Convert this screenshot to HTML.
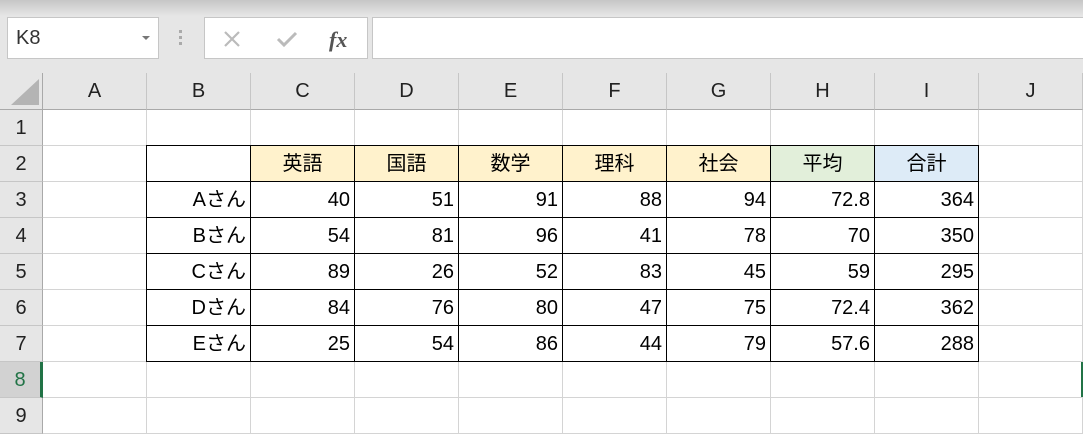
<!DOCTYPE html>
<html><head><meta charset="utf-8"><style>
*{margin:0;padding:0;box-sizing:border-box}
body{width:1083px;height:434px;overflow:hidden;background:#e6e6e6;position:relative;font-family:"Liberation Sans","Noto Sans CJK JP",sans-serif;color:#000}
.a{position:absolute}
.top{left:0;top:0;width:1083px;height:16px;background:linear-gradient(#c6c6c6,#e6e6e6)}
.box{background:#fff;border:1px solid #c6c6c6}
.ch{top:73px;height:37px;border-right:1px solid #c6c6c6;border-bottom:1px solid #a9a9a9;text-align:center;font-size:20px;line-height:36px;color:#222}
.rh{left:0;width:43px;height:36px;border-bottom:1px solid #c6c6c6;border-right:1px solid #a9a9a9;text-align:center;font-size:20px;line-height:36px;color:#222}
.t{height:37px;width:105px;border:1px solid #000;font-size:20px;line-height:36px;text-align:right;padding-right:4px}
.hd{text-align:center;padding:0;background:#fff2cc}
</style></head><body>
<div class="a top"></div>
<div class="a box" style="left:7px;top:17px;width:152px;height:42px;font-size:20px;line-height:40px;padding-left:8px;color:#333">K8
<span class="a" style="right:8px;top:18px;width:0;height:0;border-left:4px solid transparent;border-right:4px solid transparent;border-top:4px solid #777"></span></div>
<div class="a" style="left:179px;top:30px;width:3px;height:3px;background:#aaa"></div>
<div class="a" style="left:179px;top:36px;width:3px;height:3px;background:#aaa"></div>
<div class="a" style="left:179px;top:42px;width:3px;height:3px;background:#aaa"></div>
<div class="a box" style="left:204px;top:17px;width:164px;height:42px">
<svg class="a" style="left:17px;top:11px" width="20" height="20"><path d="M3 3L17 17M17 3L3 17" stroke="#bbb" stroke-width="2.2"/></svg>
<svg class="a" style="left:70px;top:11px" width="24" height="20"><path d="M3 10L9 16L21 4" stroke="#bbb" stroke-width="3" fill="none"/></svg>
<div class="a" style="left:124px;top:9px;font-family:'Liberation Serif',serif;font-style:italic;font-weight:bold;font-size:22px;color:#555">fx</div>
</div>
<div class="a box" style="left:372px;top:17px;width:720px;height:42px"></div>

<div class="a" style="left:0;top:73px;width:43px;height:37px;border-right:1px solid #a9a9a9;border-bottom:1px solid #a9a9a9"></div>
<svg class="a" style="left:11px;top:79px" width="29" height="27"><path d="M28 0L28 26L0 26Z" fill="#b4b4b4"/></svg>
<div class="a ch" style="left:43px;width:104px">A</div>
<div class="a ch" style="left:147px;width:104px">B</div>
<div class="a ch" style="left:251px;width:104px">C</div>
<div class="a ch" style="left:355px;width:104px">D</div>
<div class="a ch" style="left:459px;width:104px">E</div>
<div class="a ch" style="left:563px;width:104px">F</div>
<div class="a ch" style="left:667px;width:104px">G</div>
<div class="a ch" style="left:771px;width:104px">H</div>
<div class="a ch" style="left:875px;width:104px">I</div>
<div class="a ch" style="left:979px;width:104px">J</div>

<div class="a rh" style="top:110px">1</div>
<div class="a rh" style="top:146px">2</div>
<div class="a rh" style="top:182px">3</div>
<div class="a rh" style="top:218px">4</div>
<div class="a rh" style="top:254px">5</div>
<div class="a rh" style="top:290px">6</div>
<div class="a rh" style="top:326px">7</div>
<div class="a rh" style="top:362px;background:#d2d2d2;color:#217346;border-right:3px solid #217346">8</div>
<div class="a rh" style="top:398px">9</div>

<div class="a" style="left:43px;top:110px;width:1040px;height:324px;background:#fff;
background-image:linear-gradient(90deg,transparent 103px,#d4d4d4 103px),linear-gradient(transparent 35px,#d4d4d4 35px);background-size:104px 36px,104px 36px"></div>
<div class="a" style="left:1081px;top:362px;width:2px;height:35px;background:#217346"></div>

<div class="a t" style="left:146px;top:145px"></div>
<div class="a t hd" style="left:250px;top:145px">英語</div>
<div class="a t hd" style="left:354px;top:145px">国語</div>
<div class="a t hd" style="left:458px;top:145px">数学</div>
<div class="a t hd" style="left:562px;top:145px">理科</div>
<div class="a t hd" style="left:666px;top:145px">社会</div>
<div class="a t hd" style="left:770px;top:145px;background:#e2efda">平均</div>
<div class="a t hd" style="left:874px;top:145px;background:#ddebf7">合計</div>

<div class="a t" style="left:146px;top:181px">Aさん</div><div class="a t" style="left:250px;top:181px">40</div><div class="a t" style="left:354px;top:181px">51</div><div class="a t" style="left:458px;top:181px">91</div><div class="a t" style="left:562px;top:181px">88</div><div class="a t" style="left:666px;top:181px">94</div><div class="a t" style="left:770px;top:181px">72.8</div><div class="a t" style="left:874px;top:181px">364</div>
<div class="a t" style="left:146px;top:217px">Bさん</div><div class="a t" style="left:250px;top:217px">54</div><div class="a t" style="left:354px;top:217px">81</div><div class="a t" style="left:458px;top:217px">96</div><div class="a t" style="left:562px;top:217px">41</div><div class="a t" style="left:666px;top:217px">78</div><div class="a t" style="left:770px;top:217px">70</div><div class="a t" style="left:874px;top:217px">350</div>
<div class="a t" style="left:146px;top:253px">Cさん</div><div class="a t" style="left:250px;top:253px">89</div><div class="a t" style="left:354px;top:253px">26</div><div class="a t" style="left:458px;top:253px">52</div><div class="a t" style="left:562px;top:253px">83</div><div class="a t" style="left:666px;top:253px">45</div><div class="a t" style="left:770px;top:253px">59</div><div class="a t" style="left:874px;top:253px">295</div>
<div class="a t" style="left:146px;top:289px">Dさん</div><div class="a t" style="left:250px;top:289px">84</div><div class="a t" style="left:354px;top:289px">76</div><div class="a t" style="left:458px;top:289px">80</div><div class="a t" style="left:562px;top:289px">47</div><div class="a t" style="left:666px;top:289px">75</div><div class="a t" style="left:770px;top:289px">72.4</div><div class="a t" style="left:874px;top:289px">362</div>
<div class="a t" style="left:146px;top:325px">Eさん</div><div class="a t" style="left:250px;top:325px">25</div><div class="a t" style="left:354px;top:325px">54</div><div class="a t" style="left:458px;top:325px">86</div><div class="a t" style="left:562px;top:325px">44</div><div class="a t" style="left:666px;top:325px">79</div><div class="a t" style="left:770px;top:325px">57.6</div><div class="a t" style="left:874px;top:325px">288</div>
</body></html>
